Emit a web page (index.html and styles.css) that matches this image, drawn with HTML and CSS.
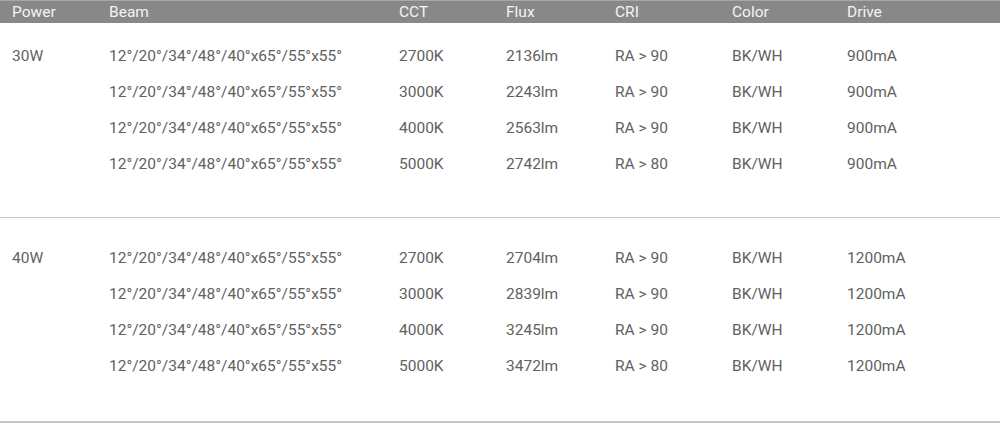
FILE: index.html
```html
<!DOCTYPE html>
<html lang="en">
<head>
<meta charset="utf-8">
<title>Specs</title>
<link rel="stylesheet" href="styles.css">
</head>
<body>
<div class="spec">
  <div class="row head">
    <div>Power</div><div>Beam</div><div>CCT</div><div>Flux</div><div>CRI</div><div>Color</div><div>Drive</div>
  </div>
  <div class="group first">
    <div class="row"><div>30W</div><div>12°/20°/34°/48°/40°x65°/55°x55°</div><div>2700K</div><div>2136lm</div><div>RA &gt; 90</div><div>BK/WH</div><div>900mA</div></div>
    <div class="row"><div></div><div>12°/20°/34°/48°/40°x65°/55°x55°</div><div>3000K</div><div>2243lm</div><div>RA &gt; 90</div><div>BK/WH</div><div>900mA</div></div>
    <div class="row"><div></div><div>12°/20°/34°/48°/40°x65°/55°x55°</div><div>4000K</div><div>2563lm</div><div>RA &gt; 90</div><div>BK/WH</div><div>900mA</div></div>
    <div class="row"><div></div><div>12°/20°/34°/48°/40°x65°/55°x55°</div><div>5000K</div><div>2742lm</div><div>RA &gt; 80</div><div>BK/WH</div><div>900mA</div></div>
  </div>
  <div class="group second">
    <div class="row"><div>40W</div><div>12°/20°/34°/48°/40°x65°/55°x55°</div><div>2700K</div><div>2704lm</div><div>RA &gt; 90</div><div>BK/WH</div><div>1200mA</div></div>
    <div class="row"><div></div><div>12°/20°/34°/48°/40°x65°/55°x55°</div><div>3000K</div><div>2839lm</div><div>RA &gt; 90</div><div>BK/WH</div><div>1200mA</div></div>
    <div class="row"><div></div><div>12°/20°/34°/48°/40°x65°/55°x55°</div><div>4000K</div><div>3245lm</div><div>RA &gt; 90</div><div>BK/WH</div><div>1200mA</div></div>
    <div class="row"><div></div><div>12°/20°/34°/48°/40°x65°/55°x55°</div><div>5000K</div><div>3472lm</div><div>RA &gt; 80</div><div>BK/WH</div><div>1200mA</div></div>
  </div>
</div>
</body>
</html>
```

FILE: styles.css
```css
html, body {
  margin: 0;
  padding: 0;
  background: #ffffff;
}
body {
  font-family: Roboto, "Liberation Sans", sans-serif;
  font-size: 15.5px;
  color: #616161;
}
.spec {
  width: 1000px;
}
.row {
  display: grid;
  grid-template-columns: 97px 290px 107px 109px 117px 115px 1fr;
  padding-left: 12px;
  height: 36px;
  line-height: 36px;
  white-space: nowrap;
}
.row.head {
  height: 22px;
  line-height: 22px;
  background: #888888;
  border-top: 1px solid #a8a8a8;
  color: #f4f4f4;
}
.group {
  border-bottom: 1px solid #c6c6c6;
}
.group.first {
  padding-top: 15px;
  padding-bottom: 35px;
}
.group.second {
  padding-top: 22px;
  padding-bottom: 37px;
  border-bottom-width: 2px;
}
```
